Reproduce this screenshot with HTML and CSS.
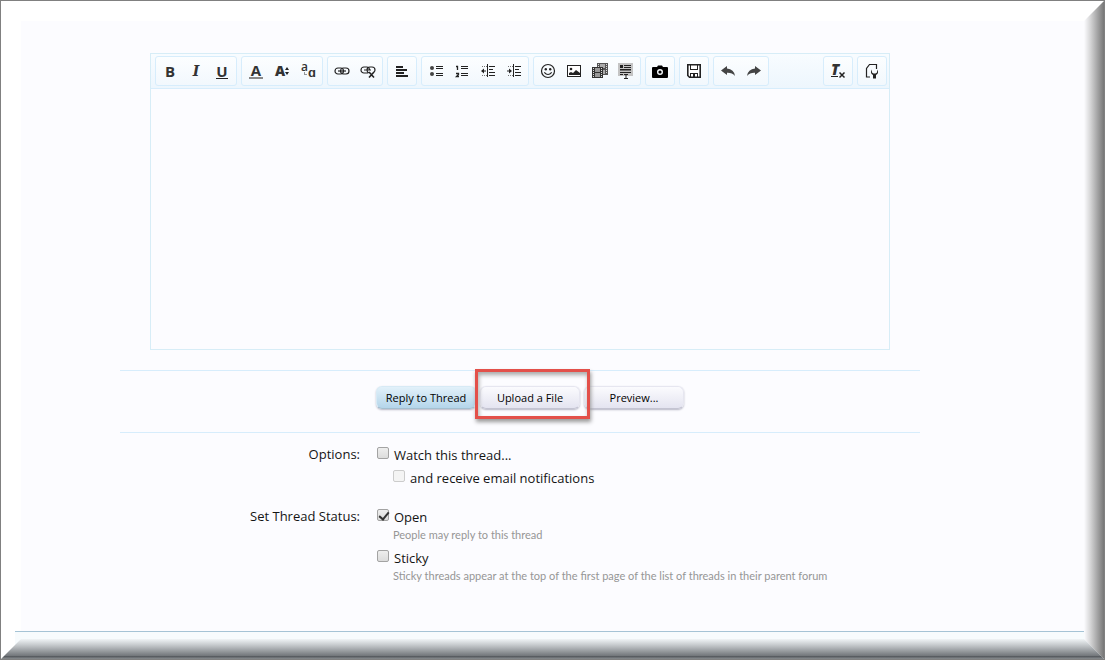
FILE: index.html
```html
<!DOCTYPE html>
<html lang="en">
<head>
<meta charset="utf-8">
<title>Reply to Thread</title>
<link rel="stylesheet" href="styles.css">
</head>
<body>
<div class="frame">
<main class="page">
<form class="reply">
  <div class="editor">
    <div class="toolbar">
      <div class="group">
        <button type="button" class="tool" aria-label="Bold"><span class="glyph">B</span></button>
        <button type="button" class="tool" aria-label="Italic"><span class="glyph serif">I</span></button>
        <button type="button" class="tool" aria-label="Underline"><span class="glyph under">U</span></button>
      </div>
      <div class="group">
        <button type="button" class="tool" aria-label="Text color"><span class="glyph color">A</span></button>
        <button type="button" class="tool" aria-label="Font size"><svg class="icon" viewBox="0 0 16 16"><text class="letter strong" x="1" y="13">A</text><path d="M11 7l2-3 2 3zM11 9h4l-2 3z"/></svg></button>
        <button type="button" class="tool" aria-label="Font family"><svg class="icon" viewBox="0 0 16 16"><text class="letter mid" x="1" y="8">a</text><text class="letter big" x="8" y="14">ɑ</text><path d="M4.500 9.500v2H7" fill="none" stroke="#333" stroke-dasharray="1 1"/></svg></button>
      </div>
      <div class="group">
        <button type="button" class="tool" aria-label="Insert link"><svg class="icon" viewBox="0 0 16 16"><g fill="none" stroke="#222" stroke-width="1.2"><rect x="1" y="5" width="8.500" height="6" rx="3"/><rect x="6.500" y="5" width="8.500" height="6" rx="3"/><path d="M4 8h8"/></g></svg></button>
        <button type="button" class="tool" aria-label="Remove link"><svg class="icon" viewBox="0 0 16 16"><g fill="none" stroke="#222" stroke-width="1.2"><path d="M8 10H4a3 3 0 010-6h3a3 3 0 012.500 3M9 10q-2-.5-2-3 0-3 3-3h2q3 0 3 3 0 1-1 2M4 7h7"/><path d="M9 9l5 5.500M14 9l-5 5.500" stroke-width="1.600"/></g></svg></button>
      </div>
      <div class="group">
        <button type="button" class="tool" aria-label="Alignment"><svg class="icon" viewBox="0 0 16 16"><path d="M2 3h7v2H2zM2 6h11v2H2zM2 9h8v2H2zM2 12h12v2H2z"/></svg></button>
      </div>
      <div class="group">
        <button type="button" class="tool" aria-label="Bullet list"><svg class="icon" viewBox="0 0 16 16"><g fill="#444"><circle cx="4" cy="5" r="2"/><circle cx="4" cy="11" r="2"/></g><path d="M8 3h7v1H8zM8 5h7v1H8zM8 10h7v1H8zM8 12h7v1H8z"/></svg></button>
        <button type="button" class="tool" aria-label="Numbered list"><svg class="icon" viewBox="0 0 16 16"><path d="M7 3h7v1H7zM7 5h7v1H7zM7 10h7v1H7zM7 12h7v1H7z"/><path d="M2 3.500h1.500V7M2 10.500h2.500v1L2.500 13.500H5" fill="none" stroke="#222" stroke-width="1.300"/></svg></button>
        <button type="button" class="tool" aria-label="Decrease indent"><svg class="icon" viewBox="0 0 16 16"><path d="M7 1h1v13H7zM9 3h6v1H9zM9 6h4v1H9zM9 9h6v1H9zM9 12h6v1H9zM1 8l3-2.500V7.500h2v1H4v2z"/><path d="M2 3.500h5M2 12.500h5" stroke="#777" stroke-dasharray="1 1"/></svg></button>
        <button type="button" class="tool" aria-label="Increase indent"><svg class="icon" viewBox="0 0 16 16"><path d="M7 1h1v13H7zM9 3h6v1H9zM9 6h4v1H9zM9 9h6v1H9zM9 12h6v1H9zM6 8L3 5.500v2H1v1h2v2z"/><path d="M2 3.500h5M2 12.500h5" stroke="#777" stroke-dasharray="1 1"/></svg></button>
      </div>
      <div class="group">
        <button type="button" class="tool" aria-label="Smilies"><svg class="icon" viewBox="0 0 16 16"><circle cx="8" cy="8" r="6.500" fill="none" stroke="#222" stroke-width="1.200"/><circle cx="5.800" cy="6.200" r="1.200"/><circle cx="10.200" cy="6.200" r="1.200"/><path d="M4.300 9.300q3.700 4.400 7.400 0" fill="none" stroke="#222" stroke-width="1.200"/></svg></button>
        <button type="button" class="tool" aria-label="Image"><svg class="icon" viewBox="0 0 16 16"><rect x="1.500" y="2.500" width="13" height="11" fill="#fff" stroke="#222"/><circle cx="5" cy="6" r="1.300"/><path d="M3 12V10l2-1 2 1 3-3 4 3v2z"/></svg></button>
        <button type="button" class="tool" aria-label="Media"><svg class="icon" viewBox="0 0 16 16"><path d="M5 0h11v12H5z" fill="#555"/><path d="M8 1h5v4H8zM8 7h5v4H8z" fill="#aaa"/><path d="M6.500 1v10M14.500 1v10" stroke="#ddd" stroke-dasharray="1 1"/><path d="M0 4h11v11H0z" fill="#333"/><path d="M3 5h5v4H3zM3 10h5v4H3z" fill="#999"/><path d="M1.500 5v9M9.500 5v9" stroke="#ddd" stroke-dasharray="1 1"/></svg></button>
        <button type="button" class="tool" aria-label="Insert"><svg class="icon" viewBox="0 0 16 16"><path d="M0 0h15v13H0z" fill="#c4c4c4"/><path d="M2 2h3v3H2zM6 2h7v1H6zM6 4h7v1H6zM2 6h11v1.500H2zM2 9h11v1H2zM2 11h3v1H2zM6 11h4v1H8.500v3H10v1H6v-1h1.500v-3H6z"/></svg></button>
      </div>
      <div class="group">
        <button type="button" class="tool" aria-label="Gallery"><svg class="icon" viewBox="0 0 16 16"><path fill="#000" fill-rule="evenodd" d="M1 4h4l1-1.500h4L11 4h4q1 0 1 1v9q0 1-1 1H1q-1 0-1-1V5q0-1 1-1zM8 6a3 3 0 100 6 3 3 0 000-6z"/><circle cx="8" cy="9" r="1.600" fill="#000"/></svg></button>
      </div>
      <div class="group">
        <button type="button" class="tool" aria-label="Drafts"><svg class="icon" viewBox="0 0 16 16"><path d="M1.800 1.800h12.400v12.400H3.500l-1.700-1.700z" fill="#fff" stroke="#222" stroke-width="1.600"/><path d="M4 2h1v4h6V2h1v5H4zM4 10h8v4h-1v-3H9v3H7v-3H5v3H4z"/></svg></button>
      </div>
      <div class="group">
        <button type="button" class="tool" aria-label="Undo"><svg class="icon" viewBox="0 0 16 16"><path fill="#444" d="M1 7.500L7 3v2.500q7 .5 8 7.500-3-3.500-8-3.200V12z"/></svg></button>
        <button type="button" class="tool" aria-label="Redo"><svg class="icon" viewBox="0 0 16 16"><path fill="#444" d="M15 7.500L9 3v2.500Q2 6 1 13q3-3.500 8-3.200V12z"/></svg></button>
      </div>
      <div class="group trailing">
        <button type="button" class="tool" aria-label="Remove formatting"><svg class="icon" viewBox="0 0 16 16"><text class="letter slant" x="1" y="12">T</text><path d="M1 13h7v1H1z"/><path d="M9.500 9.500l5 5M14.500 9.500l-5 5" stroke="#222" stroke-width="1.500"/></svg></button>
      </div>
      <div class="group">
        <button type="button" class="tool" aria-label="Use BB code editor"><svg class="icon" viewBox="0 0 16 16"><path d="M6 14H2.500V5.500l3-4H12.500V6" fill="none" stroke="#222" stroke-width="1.200"/><path d="M8 6.500Q5.500 10 9 12v3.500h3V12q3.500-2 1-5.500v3l-1.500 1h-2L8 9.500z"/></svg></button>
      </div>
    </div>
    <textarea class="message" aria-label="Message"></textarea>
  </div>
  <div class="actions">
    <button type="button" class="action primary">Reply to Thread</button>
    <span class="marked"><button type="button" class="action">Upload a File</button></span>
    <button type="button" class="action">Preview...</button>
  </div>
  <div class="options">
    <div class="name">Options:</div>
    <div class="choices">
      <label class="choice"><input class="box" type="checkbox"><span>Watch this thread...</span></label>
      <label class="choice nested"><input class="box" type="checkbox" disabled><span>and receive email notifications</span></label>
    </div>
    <div class="name">Set Thread Status:</div>
    <div class="choices">
      <label class="choice"><input class="box" type="checkbox" checked aria-describedby="open-hint"><span>Open</span></label>
      <p class="hint" id="open-hint">People may reply to this thread</p>
      <label class="choice"><input class="box" type="checkbox" aria-describedby="sticky-hint"><span>Sticky</span></label>
      <p class="hint" id="sticky-hint">Sticky threads appear at the top of the first page of the list of threads in their parent forum</p>
    </div>
  </div>
</form>
</main>
<footer class="foot"></footer>
</div>
</body>
</html>
```
FILE: styles.css
```css
* { box-sizing: border-box; }
body { margin: 0; font: 13px/18px "Trebuchet MS", "Open Sans", sans-serif; color: #141414; }
button { font: inherit; color: inherit; }
.frame {
  position: relative;
  display: flex;
  flex-direction: column;
  min-height: 100vh;
  border: 1px solid #808080;
  background: #fcfcff;
  box-shadow: inset 20px 20px #fff;
}
/* Bevelled right and bottom edges */
.frame::before, .frame::after { content: ""; position: absolute; pointer-events: none; }
.frame::before {
  top: 0; right: 0; bottom: 0; width: 20px;
  background: linear-gradient(to right, #fcfcff, #d8d8d9 30%, #777);
  clip-path: polygon(100% 0, 100% 100%, 0 calc(100% - 20px), 0 20px);
}
.frame::after {
  left: 0; right: 0; bottom: 0; height: 20px;
  background: linear-gradient(to bottom, #f0f4f6, #c6cacd 30%, #74787c 83%, #4b4f54 84%, #8a8e91);
  clip-path: polygon(0 100%, 20px 0, calc(100% - 20px) 0, 100% 100%);
}
.page { flex: 1; padding: 52px 24px 24px 119px; }
.reply { max-width: 800px; }
.editor { margin: 0 30px 20px; border: 1px solid #d7edf7; }
.toolbar {
  display: flex;
  gap: 4px;
  padding: 2px 2px 2px 4px;
  border-bottom: 1px solid #d7edfc;
  background: linear-gradient(#f8fcff, #edf6fd);
}
.group {
  display: flex;
  padding: 1px;
  border: 1px solid #d7edfc;
  border-radius: 3px;
  background: linear-gradient(#fcfeff, #f2f8fd);
}
.trailing { margin-left: auto; }
.tool {
  display: grid;
  place-items: center;
  width: 26px;
  height: 26px;
  padding: 0;
  border: 0;
  background: none;
}
.icon { width: 16px; height: 16px; fill: #222; overflow: visible; }
.letter { font-family: "Open Sans", sans-serif; fill: #333; }
.strong { font-size: 14px; font-weight: 800; }
.mid { font-size: 12px; font-weight: 600; }
.big { font-size: 13px; font-weight: 600; }
.slant { font-size: 15px; font-weight: 800; font-style: italic; }
.glyph { font: 700 15px/14px "Open Sans", sans-serif; color: #333; }
.serif { font-family: "DejaVu Serif", serif; font-style: italic; font-size: 14px; }
.under { border-bottom: 1px solid #222; }
.color { border-bottom: 2px solid #888; padding: 0 2px; line-height: 13px; }
.message {
  display: block;
  width: 100%;
  height: 260px;
  border: 0;
  padding: 8px;
  resize: none;
  outline: 0;
  background: transparent;
  font: inherit;
}
.actions {
  display: flex;
  justify-content: center;
  gap: 4px;
  padding: 15px 0 23px 20px;
  margin-bottom: 12px;
  border: 1px solid #d7edfc;
  border-width: 1px 0;
}
.action {
  width: 100px;
  height: 23px;
  padding: 0;
  border: 1px solid #e6e6f0;
  border-bottom-color: #c4c4d2;
  border-radius: 6px;
  background: linear-gradient(#fbfbfe, #e4e4f0);
  box-shadow: 0 1px 2px #b5b5c4;
  font: 11px/16px "Open Sans", sans-serif;
  color: #000;
}
.primary { background: linear-gradient(#e2f1fa, #b4d5ea); border-color: #d7eaf5; border-bottom-color: #a3bfd0; }
.marked { position: relative; display: flex; }
.marked::after {
  content: "";
  position: absolute;
  inset: -17px -10px -10px -5px;
  border: 3px solid #e3504a;
  box-shadow: 1px 3px 4px #999, inset 1px 3px 4px #aaa;
  pointer-events: none;
}
.options { display: grid; grid-template-columns: 240px 1fr; column-gap: 17px; row-gap: 20px; }
.name { text-align: right; }
.choices { display: flex; flex-direction: column; align-items: flex-start; }
.choice { display: flex; gap: 5px; padding-top: 1px; }
.nested { margin: 4px 0 0 16px; }
.box {
  appearance: none;
  flex: none;
  width: 12px;
  height: 12px;
  margin: 1px 0 0;
  border: 1px solid #a3a3a3;
  border-radius: 2px;
  background: linear-gradient(#eee, #dcdcdc);
}
.box:disabled { border-color: #ccc; background: #f4f4f4; }
.box:checked::before {
  content: "";
  display: block;
  width: 8px;
  height: 4px;
  margin: 2px 0 0 1px;
  border: solid #333;
  border-width: 0 0 2px 2px;
  rotate: -50deg;
}
.hint { margin: 0 0 4px 16px; font: 11px/18px "Trebuchet MS", Lato, sans-serif; color: #969696; }
.foot { height: 28px; margin-left: 14px; border-top: 1px solid #a5c3d5; background: #f7fbfd; }
```
